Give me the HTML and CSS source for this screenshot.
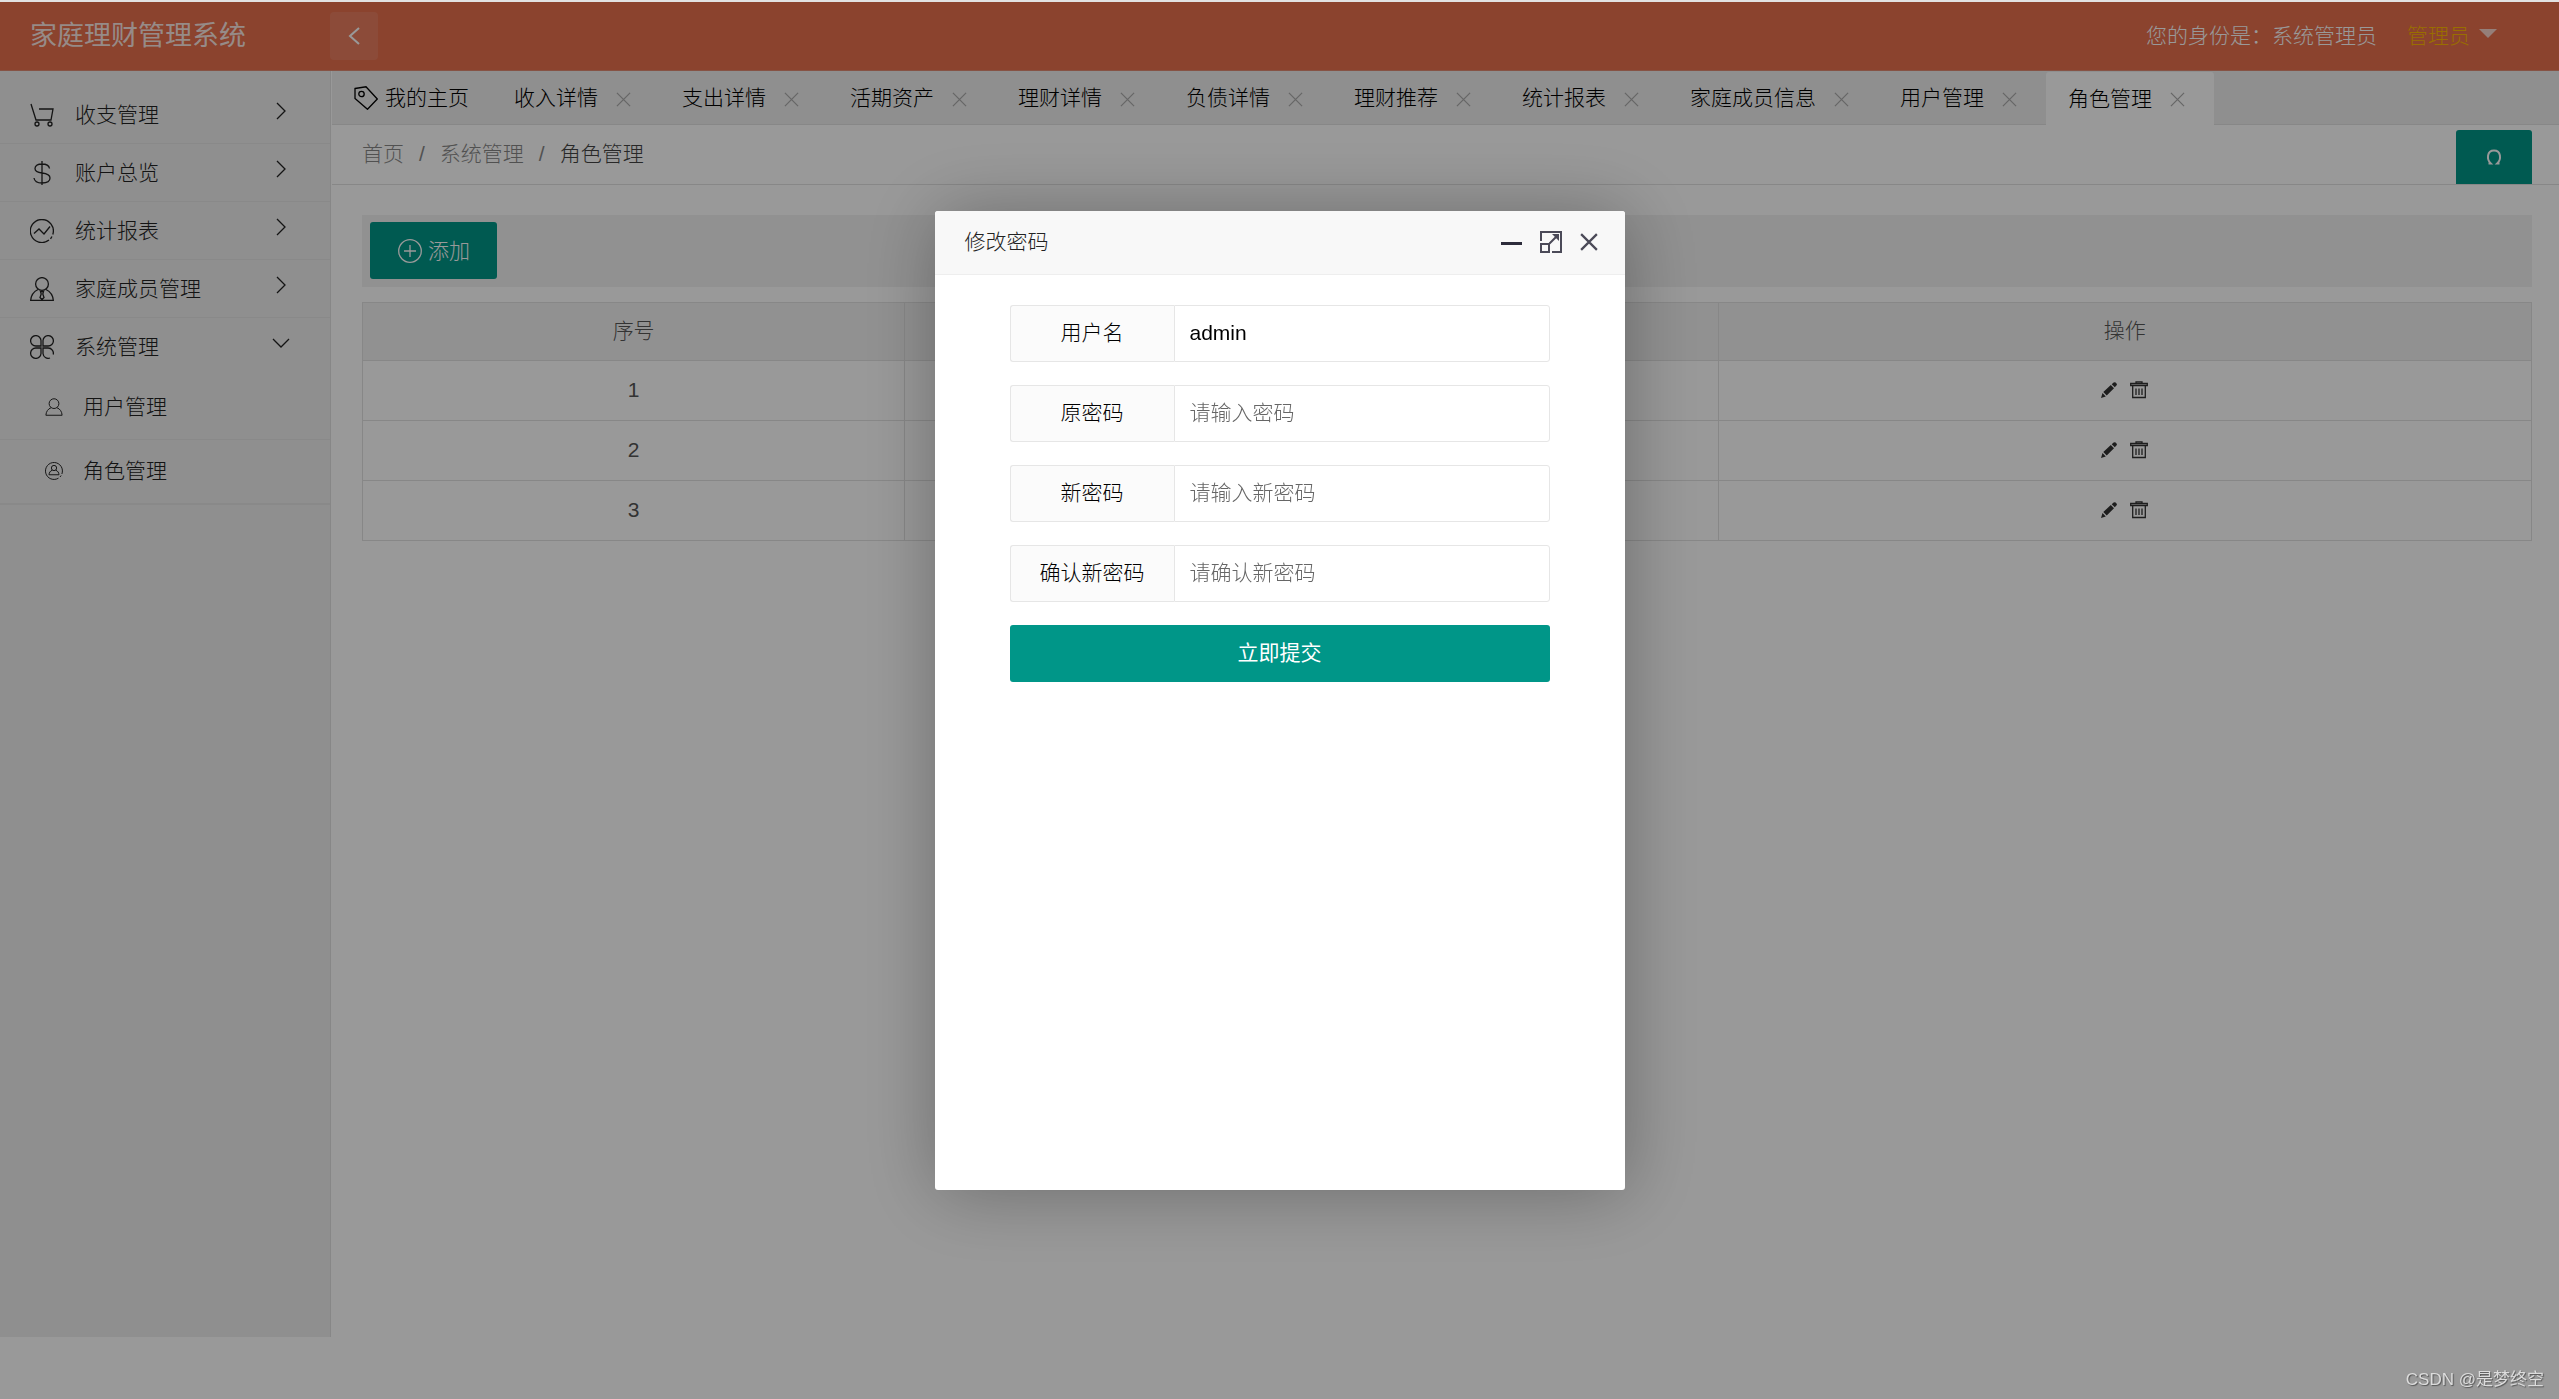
FILE: index.html
```html
<!DOCTYPE html>
<html lang="zh-CN">
<head>
<meta charset="utf-8">
<title>家庭理财管理系统</title>
<link rel="stylesheet" href="styles.css">
</head>
<body>
<svg class="sprite" aria-hidden="true">
  <symbol id="i-right" viewBox="0 0 24 24"><path d="M8 4l8 8-8 8"/></symbol>
  <symbol id="i-down" viewBox="0 0 24 24"><path d="M4 8l8 8 8-8"/></symbol>
  <symbol id="i-left" viewBox="0 0 24 24"><path d="M17 4l-9 8 9 8"/></symbol>
  <symbol id="i-x" viewBox="0 0 16 16"><path d="M1 1l14 14M15 1L1 15"/></symbol>
  <symbol id="i-cart" viewBox="0 0 24 24"><path d="M1 1l5 16h15l2-11H9"/><circle cx="7" cy="21" r="2"/><circle cx="20" cy="21" r="2"/></symbol>
  <symbol id="i-dollar" viewBox="0 0 24 24"><path d="M12 0v24M19.500 7.500C19 4.500 16 3 12 3S5 4.500 5 7.500s3 4 7 4.500 8 1.500 8 5-3.500 5-8 5-7.500-1.500-8-5"/></symbol>
  <symbol id="i-chart" viewBox="0 0 24 24"><path d="M22.800 15.500A11.500 11.500 0 1 0 19 21M20.500 19.800l1.500-2.300M4 14.500l5-4.500 5 5 6-7.500"/></symbol>
  <symbol id="i-member" viewBox="0 0 24 24"><circle cx="12" cy="7" r="6.400"/><path d="M8 12.500C3 15 1 19 .7 23.300h22.600C23 19 21 15 16 12.500M10.500 14.500h3l-.7 2.500 1.200 3.500-2 2-2-2 1.200-3.500z"/></symbol>
  <symbol id="i-clover" viewBox="0 0 24 24"><path d="M11 11V5.500A5.200 5.200 0 1 0 5.800 11zM13 11V5.500A5.200 5.200 0 1 1 18.200 11zM11 13v5.500A5.200 5.200 0 1 1 5.800 13zM20 23a5.200 5.200 0 0 1-7-4.500V13h5.200a5.200 5.200 0 0 1 5 6.500"/></symbol>
  <symbol id="i-user" viewBox="0 0 24 24"><circle cx="12" cy="7.500" r="6.500"/><path d="M8 13c-4 1.500-6.500 5-6.800 10h21.600c-.3-5-2.800-8.500-6.800-10"/></symbol>
  <symbol id="i-role" viewBox="0 0 24 24"><path d="M22.500 16A11.300 11.300 0 1 0 18 21.500M20 20l1.500-2"/><circle cx="12" cy="8" r="3.500"/><path d="M9.500 11c-2.500 1-4 3-4.200 6h13.400c-.2-3-1.700-5-4.200-6"/></symbol>
  <symbol id="i-tag" viewBox="0 0 24 24"><path d="M1 2.500L12 .8 23.300 13 13.500 23.300 1 12.500z"/><circle cx="7.500" cy="8" r="2.700"/></symbol>
  <symbol id="i-add" viewBox="0 0 24 24"><circle cx="12" cy="12" r="11.300"/><path d="M12 6v12M6 12h12"/></symbol>
  <symbol id="i-refresh" viewBox="0 0 16 16"><path d="M2.500 14.500h2.300C.5 10.500.8 1.500 8 1.500s7.500 9 3.200 13h2.300"/></symbol>
  <symbol id="i-edit" viewBox="0 0 16 16"><path class="solid" d="M0 16l1.500-5L4.800 14.500zM2.300 10L9.800 3 13 6.200 5.700 13.500zM10.700 2.200L12.600.6q1-.9 2 0l.9.9q.9 1-.1 2L13.800 5.300z"/></symbol>
  <symbol id="i-trash" viewBox="0 0 18 18"><path d="M6 2V.8h6V2M.7 2.500h16.600v2H.7zM2.700 4.500v12h12.600v-12M6 7.500v6.500M9 7.500v6.500M12 7.500v6.500"/></symbol>
  <symbol id="i-max" viewBox="0 0 22 22"><path d="M1 10V1h20v20H12M1 13h8v8H1zM9.500 12.500L18 4"/><path class="solid" d="M12 3h7v7z"/></symbol>
</svg>

<div class="app">
  <header class="header">
    <a class="logo" href="#">家庭理财管理系统</a>
    <button class="fold" type="button" aria-label="折叠菜单"><svg class="i24"><use href="#i-left"/></svg></button>
    <div class="account">
      <span>您的身份是：系统管理员</span>
      <a class="account-menu" href="#">管理员</a>
    </div>
  </header>

  <div class="body">
    <nav class="side">
      <a class="item" href="#"><svg class="i24"><use href="#i-cart"/></svg><span>收支管理</span><svg class="i24 arrow"><use href="#i-right"/></svg></a>
      <a class="item" href="#"><svg class="i24"><use href="#i-dollar"/></svg><span>账户总览</span><svg class="i24 arrow"><use href="#i-right"/></svg></a>
      <a class="item" href="#"><svg class="i24"><use href="#i-chart"/></svg><span>统计报表</span><svg class="i24 arrow"><use href="#i-right"/></svg></a>
      <a class="item" href="#"><svg class="i24"><use href="#i-member"/></svg><span>家庭成员管理</span><svg class="i24 arrow"><use href="#i-right"/></svg></a>
      <a class="item open" href="#"><svg class="i24"><use href="#i-clover"/></svg><span>系统管理</span><svg class="i24 arrow"><use href="#i-down"/></svg></a>
      <div class="sub">
        <a class="subitem" href="#"><svg class="i18"><use href="#i-user"/></svg><span>用户管理</span></a>
        <a class="subitem" href="#"><svg class="i18"><use href="#i-role"/></svg><span>角色管理</span></a>
      </div>
    </nav>

    <main class="main">
      <div class="tabs">
        <a class="tab home" href="#"><svg class="i24"><use href="#i-tag"/></svg>我的主页</a>
        <a class="tab" href="#">收入详情<svg class="close"><use href="#i-x"/></svg></a>
        <a class="tab" href="#">支出详情<svg class="close"><use href="#i-x"/></svg></a>
        <a class="tab" href="#">活期资产<svg class="close"><use href="#i-x"/></svg></a>
        <a class="tab" href="#">理财详情<svg class="close"><use href="#i-x"/></svg></a>
        <a class="tab" href="#">负债详情<svg class="close"><use href="#i-x"/></svg></a>
        <a class="tab" href="#">理财推荐<svg class="close"><use href="#i-x"/></svg></a>
        <a class="tab" href="#">统计报表<svg class="close"><use href="#i-x"/></svg></a>
        <a class="tab" href="#">家庭成员信息<svg class="close"><use href="#i-x"/></svg></a>
        <a class="tab" href="#">用户管理<svg class="close"><use href="#i-x"/></svg></a>
        <a class="tab active" href="#">角色管理<svg class="close"><use href="#i-x"/></svg></a>
      </div>
      <div class="crumbs">
        <a href="#">首页</a><span>/</span><a href="#">系统管理</a><span>/</span><a class="here" href="#">角色管理</a>
        <button class="refresh" type="button" aria-label="刷新"><svg class="i16"><use href="#i-refresh"/></svg></button>
      </div>
      <section class="content">
        <div class="toolbar">
          <button class="add" type="button"><svg class="i24"><use href="#i-add"/></svg>添加</button>
        </div>
        <table class="grid">
          <colgroup><col class="c-no"><col class="c-wide"><col class="c-wide"></colgroup>
          <thead><tr><th>序号</th><th></th><th>操作</th></tr></thead>
          <tbody>
            <tr><td>1</td><td></td><td><div class="ops"><button type="button" aria-label="编辑"><svg class="i16"><use href="#i-edit"/></svg></button><button type="button" aria-label="删除"><svg class="i18"><use href="#i-trash"/></svg></button></div></td></tr>
            <tr><td>2</td><td></td><td><div class="ops"><button type="button" aria-label="编辑"><svg class="i16"><use href="#i-edit"/></svg></button><button type="button" aria-label="删除"><svg class="i18"><use href="#i-trash"/></svg></button></div></td></tr>
            <tr><td>3</td><td></td><td><div class="ops"><button type="button" aria-label="编辑"><svg class="i16"><use href="#i-edit"/></svg></button><button type="button" aria-label="删除"><svg class="i18"><use href="#i-trash"/></svg></button></div></td></tr>
          </tbody>
        </table>
      </section>
    </main>
  </div>
</div>

<div class="shade">
  <div class="dialog" role="dialog" aria-labelledby="dialog-title">
    <div class="dialog-head">
      <h2 id="dialog-title">修改密码</h2>
      <button type="button" aria-label="最小化"><span class="dash"></span></button>
      <button type="button" aria-label="最大化"><svg class="i22"><use href="#i-max"/></svg></button>
      <button type="button" aria-label="关闭"><svg class="i18"><use href="#i-x"/></svg></button>
    </div>
    <form class="form">
      <div class="field"><label for="user">用户名</label><input id="user" type="text" value="admin"></div>
      <div class="field"><label for="old">原密码</label><input id="old" type="password" placeholder="请输入密码"></div>
      <div class="field"><label for="new">新密码</label><input id="new" type="password" placeholder="请输入新密码"></div>
      <div class="field"><label for="again">确认新密码</label><input id="again" type="password" placeholder="请确认新密码"></div>
      <button class="submit" type="button">立即提交</button>
    </form>
  </div>
</div>
<div class="watermark">CSDN @是梦终空</div>
</body>
</html>
```
FILE: styles.css
```css
* { box-sizing: border-box; }
body {
  margin: 0;
  border-top: 2px solid #e2e2e2;
  background: #fff;
  color: #222;
  font: 300 21px/30px "Liberation Sans", "Noto Sans CJK SC", sans-serif;
}
a { color: inherit; text-decoration: none; }
button, input { font: inherit; color: inherit; }
button { padding: 0; border: 0; background: none; cursor: pointer; }
.sprite { position: absolute; width: 0; height: 0; }
svg { flex: none; display: block; fill: none; stroke: currentColor; stroke-width: 1.3; }
.solid { fill: currentColor; stroke: none; }
.i16 { width: 16px; height: 16px; }
.i18 { width: 18px; height: 18px; }
.i22 { width: 22px; height: 22px; }
.i24 { width: 24px; height: 24px; }

.app { display: flex; flex-direction: column; height: calc(100vh - 2px); }

/* top bar */
.header {
  display: flex;
  align-items: center;
  height: 69px;
  padding-right: 62px;
  background: #e8704e;
  border-bottom: 1px solid #e08b74;
  color: #fff;
}
.logo { width: 330px; padding-left: 30px; font-size: 27px; font-weight: 400; color: rgba(255, 255, 255, .85); }
.fold {
  display: grid;
  place-items: center;
  width: 48px;
  height: 48px;
  border-radius: 4px;
  background: rgba(255, 255, 255, .1);
}
.fold svg { stroke-width: 2; }
.account { display: flex; gap: 30px; margin-left: auto; }
.account-menu { display: flex; gap: 9px; color: #ffb800; }
.account-menu::after {
  content: "";
  margin-top: 8px;
  height: 0;
  border: 9px solid transparent;
  border-top-color: rgba(255, 255, 255, .7);
  border-bottom: 0;
}

.body { flex: 1; display: flex; min-height: 0; }

/* side menu */
.side {
  width: 331px;
  margin-bottom: 62px;
  padding-top: 15px;
  background: #eee;
  border-right: 1px solid #e2e2e2;
}
.item {
  display: flex;
  align-items: center;
  height: 58px;
  padding: 0 37px 0 30px;
  border-bottom: 1px solid #e5e5e5;
}
.item span { margin-left: 21px; }
.item .arrow { margin: 0 0 8px auto; }
.item.open { border-bottom-color: transparent; }
.sub { border-bottom: 1px solid #e5e5e5; }
.subitem {
  display: flex;
  align-items: center;
  gap: 20px;
  height: 64px;
  padding: 0 0 2px 45px;
  border-bottom: 1px solid #e5e5e5;
}

/* tabs */
.main { flex: 1; min-width: 0; padding-left: 1px; }
.tabs {
  display: flex;
  align-items: flex-end;
  height: 54px;
  background: #eee;
  border-bottom: 1px solid #e2e2e2;
  color: #000;
}
.tab {
  display: flex;
  align-items: center;
  height: 52px;
  padding: 0 29px 0 22px;
}
.tab.home { gap: 7px; padding-right: 23px; }
.tab.active { height: 53px; margin-bottom: -1px; background: #fff; border-radius: 3px 3px 0 0; }
.close { width: 15px; height: 15px; margin: 2px 0 0 18px; color: #aaa; }

.crumbs {
  display: flex;
  align-items: center;
  gap: 15px;
  height: 60px;
  padding: 0 27px 0 30px;
  border-bottom: 1px solid #e2e2e2;
  color: #888;
}
.crumbs > a, .crumbs > span { padding-bottom: 2px; }
.crumbs .here { color: #444; }
.refresh {
  display: grid;
  place-items: center;
  align-self: flex-end;
  width: 76px;
  height: 54px;
  margin-left: auto;
  border-radius: 3px 3px 0 0;
  background: #009688;
  color: #fff;
}
.refresh svg { stroke-width: 2; }

/* role list */
.content { padding: 30px 27px 0 30px; }
.toolbar { padding: 7px 8px 8px; background: #f2f2f2; }
.add {
  display: flex;
  align-items: center;
  gap: 6px;
  height: 57px;
  padding: 0 27px 0 28px;
  border-radius: 3px;
  background: #009688;
  color: #fff;
}
.grid {
  width: 100%;
  margin-top: 15px;
  border-collapse: collapse;
  table-layout: fixed;
  color: #555;
  text-align: center;
}
.c-no { width: 25%; }
.grid th, .grid td { height: 60px; padding: 0 0 2px; border: 1px solid #e2e2e2; font-weight: 300; }
.grid th { height: 58px; background: #f2f2f2; }
.ops { display: flex; justify-content: center; align-items: center; gap: 13px; color: #333; }

/* password dialog */
.shade {
  position: fixed;
  inset: 2px 0 0;
  display: flex;
  align-items: center;
  justify-content: center;
  background: rgba(0, 0, 0, .4);
}
.dialog {
  width: 690px;
  height: 70vh;
  border-radius: 3px;
  background: #fff;
  box-shadow: 2px 2px 75px rgba(0, 0, 0, .3);
}
.dialog-head {
  display: flex;
  align-items: center;
  gap: 18px;
  height: 64px;
  padding: 0 27px 0 30px;
  border-bottom: 1px solid #eee;
  border-radius: 3px 3px 0 0;
  background: #f8f8f8;
}
.dialog-head h2 { margin: 0 auto 0 0; font: inherit; }
.dialog-head svg { color: #4b4a58; stroke-width: 2; }
.dash { display: block; width: 21px; height: 3px; margin-top: 2px; background: #2d2c3b; }
.form { display: flex; flex-direction: column; gap: 23px; padding: 30px 75px; }
.field { display: flex; height: 57px; }
.field label {
  width: 164px;
  padding: 12px 0;
  border: 1px solid #e6e6e6;
  border-right: 0;
  border-radius: 3px 0 0 3px;
  background: #fbfbfb;
  color: #000;
  text-align: center;
}
.field input {
  flex: 1;
  min-width: 0;
  padding: 0 15px;
  border: 1px solid #e6e6e6;
  border-radius: 0 3px 3px 0;
  background: #fff;
  color: #000;
  outline: 0;
}
.field input::placeholder { color: #666; }
.submit { height: 57px; border-radius: 3px; background: #009688; color: #fff; font-weight: 400; }

.watermark {
  position: fixed;
  right: 15px;
  bottom: 4px;
  color: #dcdcdc;
  font-size: 17px;
  font-weight: 400;
  text-shadow: 1px 1px 1px #555;
}
```
